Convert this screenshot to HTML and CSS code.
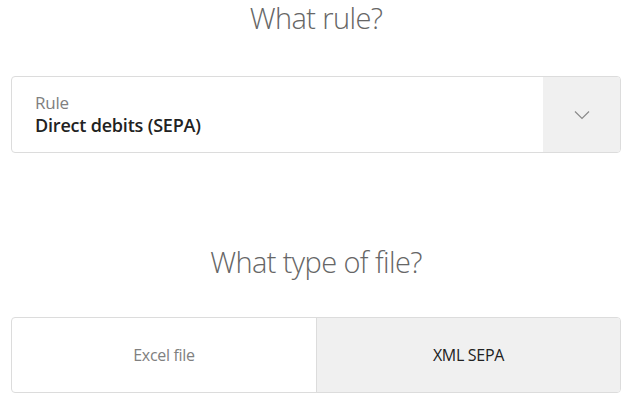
FILE: index.html
```html
<html>
<head>
	<link rel="stylesheet" href="styles.css">
</head>
<body>
	<div class="page">
		<h2 class="question">What rule?</h2>
		<div class="select">
			<div class="select-value">
				<span class="select-label">Rule</span>
				<span class="select-text">Direct debits (SEPA)</span>
			</div>
			<div class="select-toggle">
				<svg width="16" height="10" viewBox="0 0 16 10"><path d="M1 1.5 L8 8.5 L15 1.5" fill="none" stroke="#8a8a8a" stroke-width="1.2"/></svg>
			</div>
		</div>
		<h2 class="question second">What type of file?</h2>
		<div class="choice">
			<div class="choice-item">Excel file</div>
			<div class="choice-item active">XML SEPA</div>
		</div>
	</div>
</body>
</html>
```
FILE: styles.css
```css
body { margin:0; background:#fff; font-family:"Open Sans", "Noto Sans", sans-serif; color:#222; }
.page { padding:0 11px; }
.question { margin:0; text-align:center; font-weight:300; font-size:29px; line-height:36px; color:#666; letter-spacing:-0.6px; }
.second { margin-top:91px; }
.select { display:flex; margin-top:40px; height:75px; border:1px solid #dcdcdc; border-radius:4px; overflow:hidden; }
.select-value { flex:1; display:flex; flex-direction:column; justify-content:center; padding-left:23px; }
.select-label { color:#808080; font-size:17px; line-height:22px; letter-spacing:-0.2px; }
.select-text { color:#222; font-size:18px; line-height:23px; font-weight:600; letter-spacing:-0.2px; }
.select-toggle { width:77px; background:#f0f0f0; display:flex; align-items:center; justify-content:center; }
.choice { display:grid; grid-template-columns:1fr 1fr; margin-top:37px; height:74px; border:1px solid #dcdcdc; border-radius:4px; overflow:hidden; }
.choice-item { display:flex; align-items:center; justify-content:center; font-size:16px; color:#808080; letter-spacing:-0.3px; }
.choice-item.active { background:#f0f0f0; color:#222; border-left:1px solid #dcdcdc; }
```
